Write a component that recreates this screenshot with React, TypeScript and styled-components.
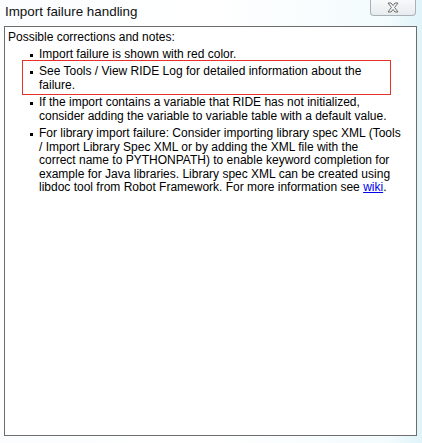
import React from 'react'
import styled, { createGlobalStyle } from 'styled-components'

const GlobalStyle = createGlobalStyle`
  html, body {
    margin: 0;
    padding: 0;
    background: #f6fbfd;
  }
`

const StyledWindow = styled.div`
  width: 422px;
  height: 443px;
  box-sizing: border-box;
  padding: 0 5px 7px 4px;
  display: flex;
  flex-direction: column;
  background: linear-gradient(90deg, #fbfdfe 0%, #ffffff 50%, #f3fbfd 92%, #dff4f9 100%);
  overflow: hidden;
`

const StyledTitleBar = styled.div`
  height: 26px;
  display: flex;
  align-items: flex-start;
  justify-content: space-between;
`

const StyledTitle = styled.div`
  margin: 4px 0 0 1px;
  font-family: "Liberation Sans", Arial, sans-serif;
  font-size: 13.4px;
  color: #111;
  line-height: 16px;
`

const StyledClose = styled.div`
  width: 46px;
  height: 16px;
  box-sizing: border-box;
  margin-right: 1px;
  border: 1px solid #a9b1b8;
  border-top: none;
  border-radius: 0 0 4px 4px;
  background: linear-gradient(#f7f9fa, #e8ecef);
  display: flex;
  align-items: center;
  justify-content: center;
`

const StyledPanel = styled.div`
  flex: 1;
  box-sizing: border-box;
  border: 1px solid #6d6d6d;
  background: #fff;
  padding: 2px 3px;
  font-family: "Liberation Sans", Arial, sans-serif;
  font-size: 12px;
  color: #000;
`

const StyledHeading = styled.div`
  line-height: 16px;
`

const StyledList = styled.ul`
  list-style: none;
  margin: 0;
  padding: 0;
`

const StyledItem = styled.li<{ $highlighted?: boolean }>`
  position: relative;
  margin: 4px 0 0 14px;
  padding: 0 0 0 17px;
  &:first-child {
    margin-top: 2.5px;
  }
  &::before {
    content: '';
    position: absolute;
    left: 8px;
    top: 6px;
    width: 3px;
    height: 3px;
    background: #000;
  }
  &::after {
    content: '';
    display: ${props => props.$highlighted ? 'block' : 'none'};
    position: absolute;
    left: 0;
    top: -5px;
    bottom: -2.5px;
    width: 369px;
    box-sizing: border-box;
    border: 1px solid #e8302a;
  }
`

const StyledLine = styled.div`
  line-height: 13.5px;
  white-space: nowrap;
`

const StyledLink = styled.a`
  color: #0000ee;
  text-decoration: underline;
`

const App: React.FC = () => {
  const items: React.ReactNode[][] = [
    ['Import failure is shown with red color.'],
    [
      'See Tools / View RIDE Log for detailed information about the',
      'failure.',
    ],
    [
      'If the import contains a variable that RIDE has not initialized,',
      'consider adding the variable to variable table with a default value.',
    ],
    [
      'For library import failure: Consider importing library spec XML (Tools',
      '/ Import Library Spec XML or by adding the XML file with the',
      'correct name to PYTHONPATH) to enable keyword completion for',
      'example for Java libraries. Library spec XML can be created using',
      <>libdoc tool from Robot Framework. For more information see <StyledLink href="#">wiki</StyledLink>.</>,
    ],
  ]

  return (
    <StyledWindow>
      <GlobalStyle />
      <StyledTitleBar>
        <StyledTitle>Import failure handling</StyledTitle>
        <StyledClose>
          <svg width="14" height="11" viewBox="0 0 14 11">
            <path
              d="M2 1 L5 1 L7 3.5 L9 1 L12 1 L8.6 5.5 L12 10 L9 10 L7 7.5 L5 10 L2 10 L5.4 5.5 Z"
              fill="#f4f4f4"
              stroke="#6f6f6f"
              strokeWidth="1"
            />
          </svg>
        </StyledClose>
      </StyledTitleBar>
      <StyledPanel>
        <StyledHeading>Possible corrections and notes:</StyledHeading>
        <StyledList>
          {items.map((lines, i) => (
            <StyledItem key={i} $highlighted={i === 1}>
              {lines.map((line, j) => (
                <StyledLine key={j}>{line}</StyledLine>
              ))}
            </StyledItem>
          ))}
        </StyledList>
      </StyledPanel>
    </StyledWindow>
  )
}

export default App
